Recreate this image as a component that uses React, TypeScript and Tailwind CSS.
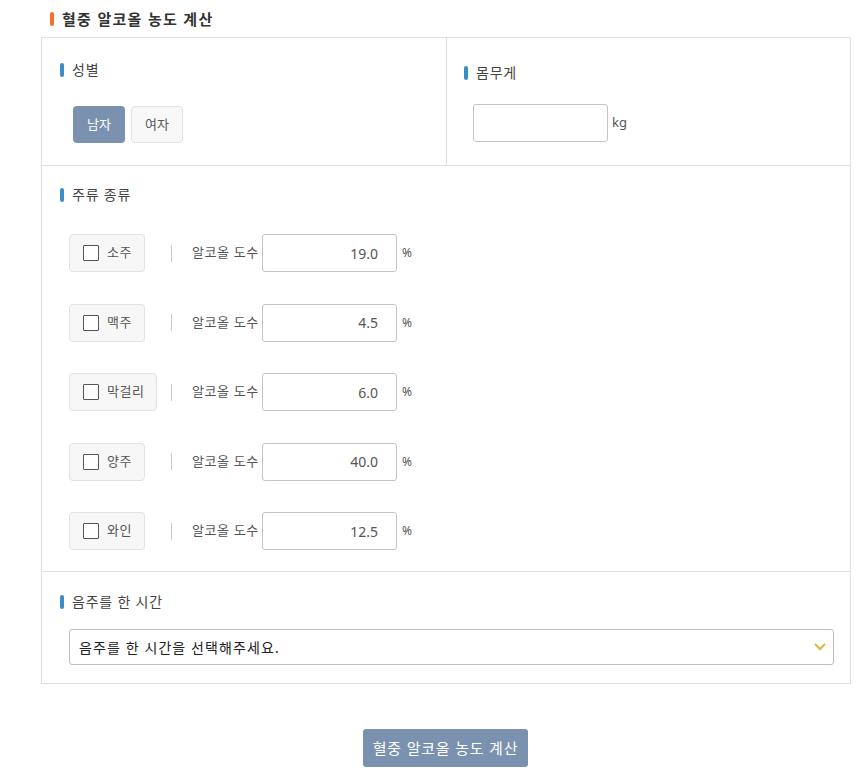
import React from 'react';

// 주류 목록
const drinks = [
    { name: '소주', abv: '19.0' },
    { name: '맥주', abv: '4.5' },
    { name: '막걸리', abv: '6.0' },
    { name: '양주', abv: '40.0' },
    { name: '와인', abv: '12.5' },
];

const Label: React.FC<{ text: string }> = ({ text }) => (
    <div className="flex items-center gap-[8px] h-[18px]">
        <span className="w-[4px] h-[14px] rounded-[2px] bg-[#3b8fc9]" />
        <span className="text-[14px] text-[#444] leading-[18px] tracking-[0.8px]">{text}</span>
    </div>
);

const App: React.FC = () => {
    return (
        <div
            className="w-[866px] h-[780px] bg-white text-[#333]"
            style={{ fontFamily: '"Noto Sans", "Noto Sans CJK KR", sans-serif' }}
        >
            {/* 제목 */}
            <div className="h-[37px] flex items-center gap-[8px] pl-[50px]">
                <span className="w-[4px] h-[14px] rounded-[2px] bg-[#f2722b]" />
                <h1 className="text-[15px] font-bold text-[#333] leading-[18px] tracking-[1.3px]">혈중 알코올 농도 계산</h1>
            </div>

            {/* 입력 박스 */}
            <div className="ml-[41px] w-[810px] border border-[#e0e0e0]">
                {/* 성별 / 몸무게 */}
                <div className="flex h-[128px] border-b border-[#e0e0e0]">
                    <div className="w-[405px] border-r border-[#e0e0e0] pl-[18px] pt-[23px]">
                        <Label text="성별" />
                        <div className="flex gap-[6px] mt-[27px] ml-[13px]">
                            <button className="w-[52px] h-[37px] rounded-[4px] bg-[#7a92b0] text-white text-[13px]">남자</button>
                            <button className="w-[52px] h-[37px] rounded-[4px] bg-[#f8f8f8] border border-[#e2e2e2] text-[#555] text-[13px]">여자</button>
                        </div>
                    </div>
                    <div className="flex-1 pl-[17px] pt-[26px]">
                        <Label text="몸무게" />
                        <div className="flex items-center gap-[4px] mt-[22px] ml-[9px]">
                            <input className="w-[135px] h-[38px] border border-[#c4c4c4] rounded-[3px] outline-none px-2" />
                            <span className="text-[13px] text-[#555]">kg</span>
                        </div>
                    </div>
                </div>

                {/* 주류 종류 */}
                <div className="border-b border-[#e0e0e0] pl-[18px] pt-[20px] pb-[21px]">
                    <Label text="주류 종류" />
                    <div className="flex flex-col gap-[31.5px] mt-[30px] ml-[9px]">
                        {drinks.map((d) => (
                            <div key={d.name} className="flex items-center h-[38px]">
                                <div className="w-[102px]">
                                    <label className="inline-flex items-center gap-[8px] h-[38px] pl-[13px] pr-[12px] rounded-[4px] bg-[#f7f7f7] border border-[#e2e2e2]">
                                        <span className="w-[16px] h-[16px] border border-[#555] bg-white rounded-[1px]" />
                                        <span className="text-[13px] text-[#555] tracking-[0.5px]">{d.name}</span>
                                    </label>
                                </div>
                                <span className="w-px h-[17px] bg-[#c8c8c8]" />
                                <span className="ml-[20px] w-[70px] text-[13px] text-[#555] tracking-[0.6px] whitespace-nowrap">알코올 도수</span>
                                <input
                                    readOnly
                                    value={d.abv}
                                    className="w-[135px] h-[38px] border border-[#c4c4c4] rounded-[3px] text-right pr-[18px] text-[14px] text-[#555] outline-none"
                                />
                                <span className="ml-[5px] text-[12px] text-[#555]">%</span>
                            </div>
                        ))}
                    </div>
                </div>

                {/* 음주를 한 시간 */}
                <div className="pl-[18px] pt-[21px] pb-[18px]">
                    <Label text="음주를 한 시간" />
                    <div className="mt-[18px] ml-[9px] w-[765px] h-[36px] border border-[#bdbdbd] rounded-[3px] flex items-center justify-between pl-[9px] pr-[6px]">
                        <span className="text-[14px] text-[#222] tracking-[1.1px]">음주를 한 시간을 선택해주세요.</span>
                        <svg width="14" height="10" viewBox="0 0 14 10" fill="none">
                            <polyline points="2,2 7,7 12,2" stroke="#e0b53c" strokeWidth="2" />
                        </svg>
                    </div>
                </div>
            </div>

            {/* 계산 버튼 */}
            <div className="flex justify-center mt-[45px] pl-[25px]">
                <button className="w-[165px] h-[38px] rounded-[3px] bg-[#7a92b0] text-white text-[15px] tracking-[0.8px]">혈중 알코올 농도 계산</button>
            </div>
        </div>
    );
};

export default App;
